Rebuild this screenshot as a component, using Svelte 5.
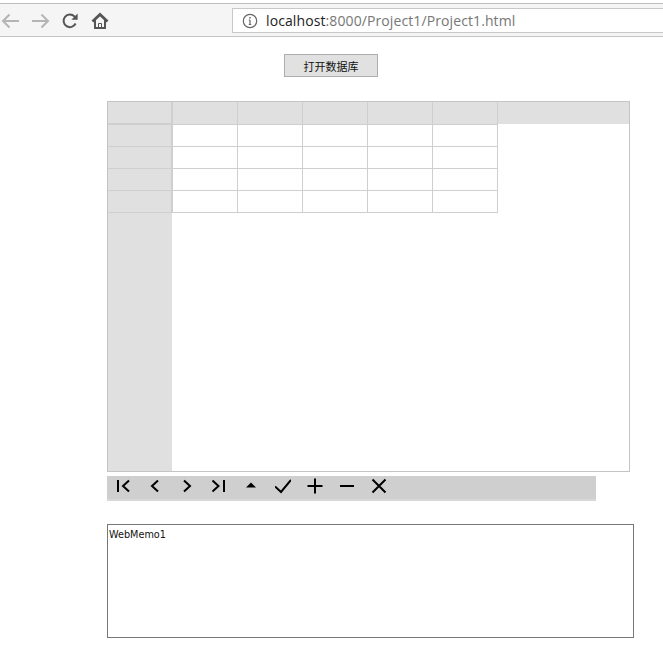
<script lang="ts">
  const columns = [0, 1, 2, 3, 4];
  const rows = [0, 1, 2, 3];
  let memo = 'WebMemo1';
</script>

<div class="browser-bar">
  <div class="nav-icons">
    <svg width="20" height="20" viewBox="0 0 20 20" class="arrow"><path d="M18 10H2M8.500 3.500 2 10l6.500 6.500" /></svg>
    <svg width="20" height="20" viewBox="0 0 20 20" class="arrow"><path d="M1 10h16M10.500 3.500 17 10l-6.500 6.500" /></svg>
    <svg width="18" height="18" viewBox="0 0 18 18" class="reload">
      <path d="M14.600 11.500A6.300 6.300 0 1 1 13.400 4.400L15 6" />
      <path class="solid" d="M16.600 1.600v6.200h-6.200z" />
    </svg>
    <svg width="18" height="18" viewBox="0 0 18 18" class="home">
      <path class="roof" d="M1.500 9.500 9 2.500l7.500 7" />
      <path d="M4 8v8h10V8" />
      <path class="thin" d="M7.500 16v-4.500h3V16" />
    </svg>
  </div>
  <div class="address">
    <svg width="16" height="16" viewBox="0 0 16 16" class="info">
      <circle cx="8" cy="8" r="6.700" />
      <path d="M8 7v4.500M6.800 11.500h2.400M6.800 7H8" />
      <circle class="dot" cx="8" cy="4.800" r=".9" />
    </svg>
    <span class="url"><span class="host">localhost</span>:8000/Project1/Project1.html</span>
  </div>
</div>

<main class="page">
  <div class="action-row">
    <button class="open-button">打开数据库</button>
  </div>

  <div class="db-grid">
    <div class="fixed-col">
      <div class="corner"></div>
      {#each rows as row}
        <div class="row-head" data-row={row}></div>
      {/each}
    </div>
    <div class="data-area">
      <div class="head-row">
        {#each columns as col}
          <div class="col-head" data-col={col}></div>
        {/each}
      </div>
      {#each rows as row}
        <div class="data-row" data-row={row}>
          {#each columns as col}
            <div class="cell" data-col={col}></div>
          {/each}
        </div>
      {/each}
    </div>
  </div>

  <div class="navigator">
    <button aria-label="first"><svg viewBox="0 0 16 16"><path d="M3 2v12M14 2.500 8 8l6 5.500" /></svg></button>
    <button aria-label="prior"><svg viewBox="0 0 16 16"><path d="M11 2.500 5 8l6 5.500" /></svg></button>
    <button aria-label="next"><svg viewBox="0 0 16 16"><path d="m5 2.500 6 5.500-6 5.500" /></svg></button>
    <button aria-label="last"><svg viewBox="0 0 16 16"><path d="m1.500 2.500 6 5.500-6 5.500M13 2v12" /></svg></button>
    <button aria-label="edit"><svg viewBox="0 0 16 16"><path class="solid" d="M8 4.500 13 9.500H3z" /></svg></button>
    <button aria-label="post"><svg viewBox="0 0 16 16"><path d="M0 8.500 6 14 16 2" /></svg></button>
    <button aria-label="insert"><svg viewBox="0 0 16 16"><path d="M8 .5v15M.5 8h15" /></svg></button>
    <button aria-label="delete"><svg viewBox="0 0 16 16"><path d="M1 8h14" /></svg></button>
    <button aria-label="cancel"><svg viewBox="0 0 16 16"><path d="m1.500 1.500 13 13M14.500 1.500l-13 13" /></svg></button>
  </div>

  <div class="memo">{memo}</div>
</main>

<style>
  :global(body) {
    margin: 0;
    background: #fff;
    font-family: 'Liberation Sans', 'Noto Sans CJK SC', sans-serif;
  }

  .browser-bar {
    box-sizing: border-box;
    height: 37px;
    display: flex;
    align-items: center;
    padding-top: 4px;
    background: #f5f5f5;
    border-top: 1px solid #fff;
    border-bottom: 1px solid #c4c4c4;
    box-shadow: inset 0 2px 0 #fff, inset 0 3px 0 #bdbdbd;
  }

  .nav-icons {
    width: 232px;
    flex-shrink: 0;
    display: flex;
    align-items: center;
    gap: 10px;
    padding-left: 1px;
    box-sizing: border-box;
  }

  .nav-icons svg {
    fill: none;
    stroke-width: 2;
    flex-shrink: 0;
  }

  .arrow {
    stroke: #b5b5b5;
  }

  .reload,
  .home {
    stroke: #555;
  }

  .home {
    margin-left: 2px;
  }

  .nav-icons .solid {
    fill: #555;
    stroke: none;
  }

  .nav-icons .roof {
    stroke-width: 2.800;
  }

  .nav-icons .thin {
    stroke-width: 1;
  }

  .address {
    flex: 1;
    height: 25px;
    display: flex;
    align-items: center;
    gap: 8px;
    padding-left: 9px;
    background: #fff;
    border: 1px solid #c8c8c8;
    border-right: none;
    box-sizing: border-box;
  }

  .info {
    fill: none;
    stroke: #666;
    stroke-width: 1.2;
  }

  .info .dot {
    fill: #666;
    stroke: none;
  }

  .url {
    font-family: 'Open Sans', 'Liberation Sans', sans-serif;
    font-size: 14px;
    letter-spacing: 0.1px;
    color: #767676;
  }

  .host {
    color: #222;
  }

  .page {
    padding: 17px 0 0 107px;
  }

  .action-row {
    padding-left: 177px;
    height: 47px;
  }

  .open-button {
    width: 94px;
    height: 23px;
    padding: 0;
    background: #e1e1e1;
    border: 1px solid #adadad;
    border-radius: 0;
    font-size: 11px;
    font-family: 'Noto Sans CJK SC', sans-serif;
    color: #111;
  }

  .db-grid {
    box-sizing: border-box;
    width: 523px;
    height: 371px;
    display: flex;
    border: 1px solid #c4c4c4;
    background: #fff;
  }

  .fixed-col {
    width: 64px;
    flex-shrink: 0;
    background: #e0e0e0;
  }

  .corner,
  .row-head {
    box-sizing: border-box;
    height: 22px;
    border-bottom: 1px solid #cfcfcf;
    border-right: 1px solid #cfcfcf;
  }

  .corner {
    height: 23px;
    border-bottom-width: 2px;
  }

  .data-area {
    flex: 1;
  }

  .head-row {
    display: flex;
    height: 22px;
    background: #e0e0e0;
  }

  .data-row {
    display: flex;
    height: 22px;
  }

  .head-row + .data-row {
    margin-top: 1px;
  }

  .col-head,
  .cell {
    box-sizing: border-box;
    width: 65px;
    height: 22px;
    border-right: 1px solid #cfcfcf;
    border-bottom: 1px solid #cfcfcf;
  }

  .col-head:first-child,
  .cell:first-child {
    width: 66px;
    border-left: 1px solid #cfcfcf;
  }

  .col-head {
    height: 23px;
    background: #e0e0e0;
  }

  .navigator {
    box-sizing: border-box;
    width: 489px;
    height: 25px;
    margin-top: 4px;
    display: flex;
    align-items: center;
    padding: 0 1px 6px 0;
    background: #cfcfcf;
    box-shadow: inset 0 -2px 0 #d8d8d8;
  }

  .navigator button {
    width: 32px;
    height: 19px;
    padding: 0;
    border: none;
    background: transparent;
    display: flex;
    align-items: center;
    justify-content: center;
  }

  .navigator svg {
    width: 16px;
    height: 16px;
    fill: none;
    stroke: #000;
    stroke-width: 2;
  }

  .navigator .solid {
    fill: #000;
    stroke: none;
  }

  .memo {
    box-sizing: border-box;
    width: 527px;
    height: 114px;
    margin-top: 23px;
    padding: 3px 1px;
    border: 1px solid #777;
    background: #fff;
    font-family: 'DejaVu Sans', sans-serif;
    font-size: 9.700px;
    line-height: 13px;
    color: #111;
  }
</style>
